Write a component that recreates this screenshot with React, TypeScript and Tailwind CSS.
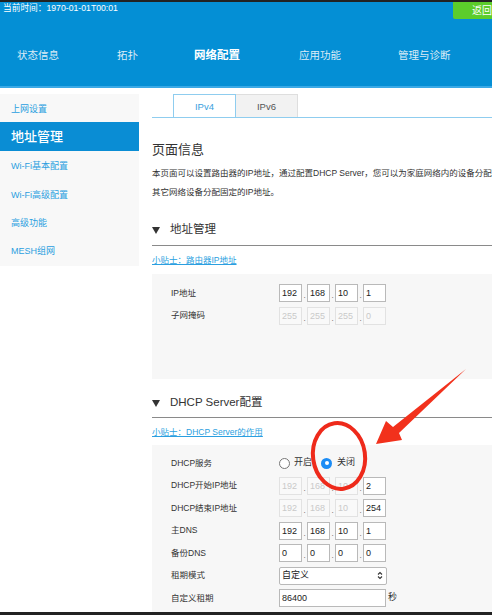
import React from 'react';

const navItems = [
  { label: '状态信息', w: 'w-[100px]' },
  { label: '拓扑', w: 'w-[77px]' },
  { label: '网络配置', w: 'w-[105px]', active: true },
  { label: '应用功能', w: 'w-[99px]' },
  { label: '管理与诊断', w: 'w-[90px]' },
];

const sideItems = ['上网设置', '地址管理', 'Wi-Fi基本配置', 'Wi-Fi高级配置', '高级功能', 'MESH组网'];

const IpBox: React.FC<{ value: string; disabled?: boolean }> = ({ value, disabled }) => (
  <div
    className={
      disabled
        ? 'w-[23px] h-[18px] border border-[#e2e2e2] bg-[#f9f9f9] text-[#c9c9c9] text-[9px] leading-[16px] pl-[2px]'
        : 'w-[23px] h-[18px] border border-[#b9b9b9] bg-white text-[#222] text-[9px] leading-[16px] pl-[2px]'
    }
  >
    {value}
  </div>
);

const IpInput: React.FC<{ values: string[]; disabled?: boolean[] }> = ({ values, disabled = [] }) => (
  <div className="flex items-end">
    {values.map((v, i) => (
      <React.Fragment key={i}>
        {i > 0 && <span className="w-[5px] text-center text-[8px] leading-[12px] text-[#555]">.</span>}
        <IpBox value={v} disabled={disabled[i]} />
      </React.Fragment>
    ))}
  </div>
);

const Row: React.FC<{ label: string; children: React.ReactNode }> = ({ label, children }) => (
  <div className="flex h-[18px] items-center">
    <span className="w-[108px] text-[8.5px] text-[#333]">{label}</span>
    {children}
  </div>
);

const SectionTitle: React.FC<{ title: string }> = ({ title }) => (
  <div className="flex items-center gap-[10px] h-[16px] text-[11.5px] text-[#333]">
    <svg width="8" height="7" viewBox="0 0 8 7">
      <path d="M0 0 L8 0 L4 7 Z" fill="#333" />
    </svg>
    <span>{title}</span>
  </div>
);

export default function App() {
  return (
    <div className="relative flex flex-col w-[492px] h-[615px] overflow-hidden bg-white font-['Liberation_Sans','Noto_Sans_CJK_SC',sans-serif]">
      <div className="h-[2px] shrink-0 bg-[#222]" />

      {/* Header */}
      <header className="h-[84px] shrink-0 bg-[#048fd5]">
        <div className="flex justify-between h-[17px]">
          <span className="pl-[3px] text-[8.7px] leading-[12px] text-white">当前时间：1970-01-01T00:01</span>
          <div className="w-[39px] h-[17px] shrink-0 bg-[#5ccd2b] rounded-bl-[2px] pl-[19px] text-[10px] leading-[17px] text-white whitespace-nowrap overflow-hidden">
            返回
          </div>
        </div>
        <nav className="mt-[29px] flex pl-[17px]">
          {navItems.map((n) => (
            <span
              key={n.label}
              className={
                n.active
                  ? `${n.w} shrink-0 text-[11.5px] leading-[14px] font-bold text-white`
                  : `${n.w} shrink-0 text-[10.5px] leading-[14px] text-[#dcecf7]`
              }
            >
              {n.label}
            </span>
          ))}
        </nav>
      </header>
      <div className="h-[2px] shrink-0 bg-[#3aa9e6]" />

      {/* Body */}
      <div className="flex flex-1 min-h-0">
        <aside className="w-[139px] shrink-0 self-start mt-[6px] pb-[2px] bg-[#f8f8f8]">
          {sideItems.map((s) =>
            s === '地址管理' ? (
              <div key={s} className="h-[28.4px] flex items-center pl-[11px] bg-[#0a8dd4] text-white text-[13px] font-medium">
                {s}
              </div>
            ) : (
              <div key={s} className="h-[28.4px] flex items-center pl-[11px] pt-[4px] text-[#2b9fe0] text-[9px]">
                {s}
              </div>
            )
          )}
        </aside>

        <main className="flex-1 pl-[13px] pt-[6px]">
          {/* Tabs */}
          <div className="flex pl-[21px] border-b border-[#8fcdef]">
            <div className="w-[63px] h-[23px] border border-b-0 border-[#8fcdef] bg-white text-center text-[9.5px] leading-[23px] text-[#3a9fde]">
              IPv4
            </div>
            <div className="w-[62px] h-[23px] border border-b-0 border-l-0 border-[#dedede] bg-[#f2f2f2] text-center text-[9.5px] leading-[23px] text-[#555]">
              IPv6
            </div>
          </div>

          <h2 className="mt-[23px] text-[13px] leading-[18px] text-[#333]">页面信息</h2>
          <p className="mt-[5px] text-[8.5px] leading-[19px] text-[#333] whitespace-nowrap">
            本页面可以设置路由器的IP地址，通过配置DHCP Server，您可以为家庭网络内的设备分配IP地址，也可以为
            <br />
            其它网络设备分配固定的IP地址。
          </p>

          {/* 地址管理 */}
          <div className="mt-[20px] pb-[7px] border-b border-[#8a8a8a]">
            <SectionTitle title="地址管理" />
          </div>
          <div className="mt-[8px] text-[8.5px] leading-[12px] text-[#2b9fe0] underline">小贴士：路由器IP地址</div>
          <div className="mt-[8px] h-[105px] bg-[#f7f7f7] pl-[19px] pt-[10px] flex flex-col gap-[4.5px]">
            <Row label="IP地址">
              <IpInput values={['192', '168', '10', '1']} />
            </Row>
            <Row label="子网掩码">
              <IpInput values={['255', '255', '255', '0']} disabled={[true, true, true, true]} />
            </Row>
          </div>

          {/* DHCP */}
          <div className="mt-[16px] pb-[6px] border-b border-[#8a8a8a]">
            <SectionTitle title="DHCP Server配置" />
          </div>
          <div className="mt-[8px] text-[8.5px] leading-[12px] text-[#2b9fe0] underline">小贴士：DHCP Server的作用</div>
          <div className="mt-[7px] bg-[#f7f7f7] pl-[19px] pt-[9px] pb-[10px] flex flex-col gap-[4.5px]">
            <Row label="DHCP服务">
              <div className="flex items-center text-[9px] text-[#333]">
                <span className="w-[11px] h-[11px] rounded-full border border-[#777] bg-white" />
                <span className="ml-[4px]">开启</span>
                <span className="ml-[9px] w-[11px] h-[11px] rounded-full bg-[#1b8cf5] flex items-center justify-center">
                  <span className="w-[4px] h-[4px] rounded-full bg-white" />
                </span>
                <span className="ml-[5px]">关闭</span>
              </div>
            </Row>
            <Row label="DHCP开始IP地址">
              <IpInput values={['192', '168', '10', '2']} disabled={[true, true, true, false]} />
            </Row>
            <Row label="DHCP结束IP地址">
              <IpInput values={['192', '168', '10', '254']} disabled={[true, true, true, false]} />
            </Row>
            <Row label="主DNS">
              <IpInput values={['192', '168', '10', '1']} />
            </Row>
            <Row label="备份DNS">
              <IpInput values={['0', '0', '0', '0']} />
            </Row>
            <Row label="租期模式">
              <div className="w-[108px] h-[18px] border border-[#b9b9b9] rounded-[2px] bg-white flex items-center justify-between pl-[2px] pr-[3px] text-[9px] text-[#222]">
                <span>自定义</span>
                <svg width="6" height="9" viewBox="0 0 6 9">
                  <path d="M1 3.5 L3 1.5 L5 3.5 M1 5.5 L3 7.5 L5 5.5" fill="none" stroke="#333" strokeWidth="1.1" />
                </svg>
              </div>
            </Row>
            <Row label="自定义租期">
              <div className="w-[107px] h-[18px] border border-[#b9b9b9] bg-white pl-[2px] text-[9px] leading-[16px] text-[#222]">
                86400
              </div>
              <span className="ml-[2px] text-[9px] text-[#333]">秒</span>
            </Row>
          </div>
        </main>
      </div>

      <div className="h-[3px] shrink-0 bg-[#222]" />

      {/* Annotation overlay */}
      <svg className="absolute inset-0 pointer-events-none" width="492" height="615" viewBox="0 0 492 615">
        <ellipse cx="339" cy="456" rx="26" ry="33" fill="none" stroke="#ee2a1b" strokeWidth="4" transform="rotate(-8 339 456)" />
        <polygon points="376,444 386,421 393,427 466,369 399,433 402,440" fill="#f2311c" />
      </svg>
    </div>
  );
}
